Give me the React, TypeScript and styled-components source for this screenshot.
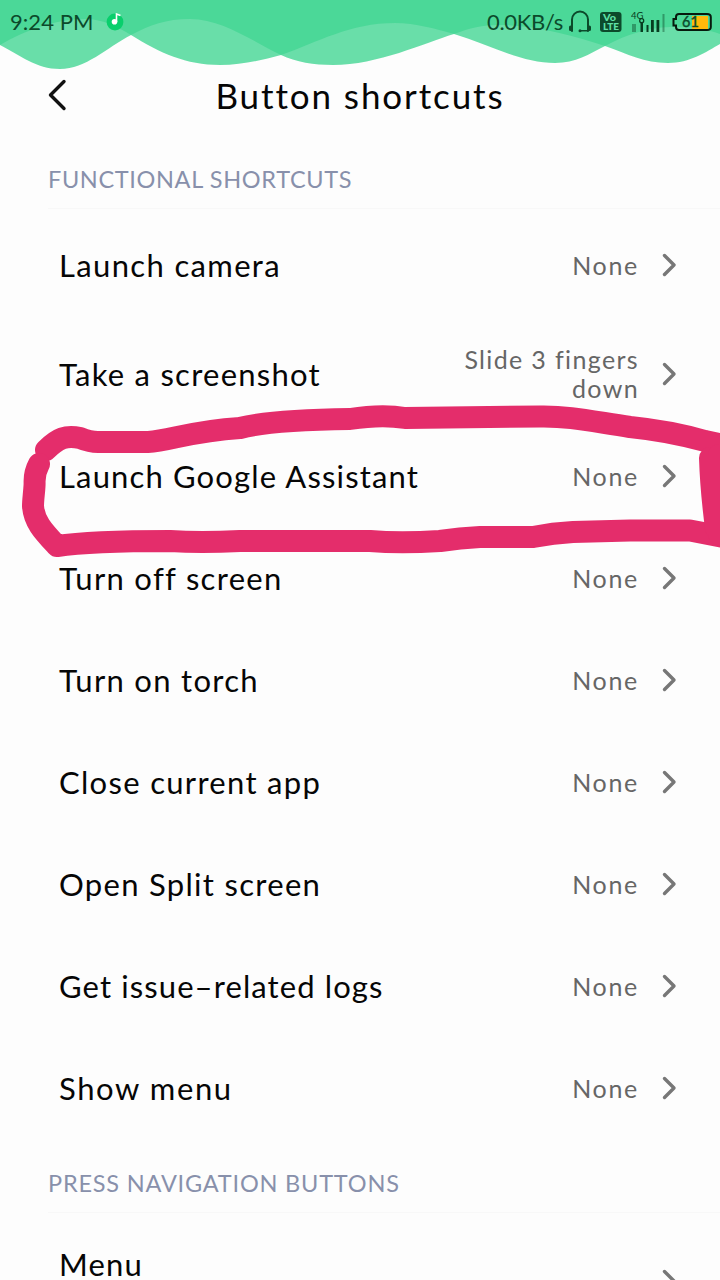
import React from "react";
import styled, { createGlobalStyle } from "styled-components";

const GlobalStyle = createGlobalStyle`
  * { box-sizing: border-box; }
  body { margin: 0; background: #fdfdfd; overflow: hidden; }
`;

const Screen = styled.main`
  position: relative;
  display: flex;
  flex-direction: column;
  width: 720px;
  height: 1280px;
  overflow: hidden;
  background: #fdfdfd;
  color: #060606;
  font-family: Lato, "Open Sans", sans-serif;

  > * { flex-shrink: 0; }
`;

const Waves = styled.svg`
  position: absolute;
  top: 0;
  left: 0;
`;

const StatusBar = styled.header`
  position: relative;
  display: flex;
  align-items: center;
  justify-content: space-between;
  height: 44px;
  padding: 0 8px 0 10px;
  color: #0c4a2b;
`;

const StatusGroup = styled.div`
  display: flex;
  align-items: center;
`;

const StatusText = styled.span<{ $track: number }>`
  font-size: 22px;
  line-height: 44px;
  letter-spacing: ${(p) => p.$track}px;
  white-space: nowrap;
`;

const StatusIcon = styled.svg<{ $before: number }>`
  display: block;
  margin-left: ${(p) => p.$before}px;
  font-family: Lato, sans-serif;
`;

const TitleBar = styled.div`
  display: grid;
  grid-template-columns: 96px 1fr 96px;
  align-items: center;
  height: 104px;
`;

const BackButton = styled.button`
  display: flex;
  padding: 0 0 2px 47px;
  border: 0;
  background: none;
`;

const Title = styled.h1`
  margin: 0;
  padding-bottom: 2px;
  font-size: 35px;
  font-weight: 400;
  line-height: 44px;
  letter-spacing: 1.9px;
  text-align: center;
  white-space: nowrap;
`;

const Section = styled.section`
  display: flex;
  flex-direction: column;
`;

const SectionTitle = styled.h2<{ $track: number }>`
  height: 61px;
  margin: 0 0 0 48px;
  border-bottom: 1px solid #f8f8f8;
  color: #8890ab;
  font-size: 23.5px;
  font-weight: 400;
  line-height: 63px;
  letter-spacing: ${(p) => p.$track}px;
  white-space: nowrap;
`;

const Rows = styled.div`
  display: flex;
  flex-direction: column;
  padding: 5px 0 13px;
`;

const Row = styled.div<{ $tall?: boolean }>`
  display: flex;
  align-items: center;
  height: ${(p) => (p.$tall ? 109 : 102)}px;
  padding: ${(p) => (p.$tall ? 7 : 0)}px 43px 0 59px;
`;

const Label = styled.span<{ $track: number }>`
  flex: 1;
  font-size: 31px;
  line-height: 40px;
  letter-spacing: ${(p) => p.$track}px;
  white-space: nowrap;
`;

const DetailRow = styled(Row)`
  height: 136px;
  align-items: flex-start;
  padding-top: 37px;

  ${Label} { line-height: 28px; }
  svg { margin-top: 19px; }
`;

const Value = styled.span<{ $track: number }>`
  width: 190px;
  margin-right: 23px;
  color: #666;
  font-size: 25px;
  line-height: 29px;
  letter-spacing: ${(p) => p.$track}px;
  text-align: right;
`;

const Marker = styled.svg`
  position: absolute;
  top: 400px;
  left: 0;
`;

const Chevron = () => (
  <svg width="15" height="24" viewBox="0 0 15 24" fill="none" stroke="#777" strokeWidth="3.4" strokeLinecap="round" strokeLinejoin="round">
    <path d="M2.5 2.5 12 12 2.5 21.5" />
  </svg>
);

const shortcuts = [
  { label: "Launch camera", value: "None", track: 1.35 },
  { label: "Take a screenshot", value: "Slide 3 fingers down", track: 1.25 },
  { label: "Launch Google Assistant", value: "None", track: 1.15 },
  { label: "Turn off screen", value: "None", track: 1.3 },
  { label: "Turn on torch", value: "None", track: 1.3 },
  { label: "Close current app", value: "None", track: 1.3 },
  { label: "Open Split screen", value: "None", track: 1.3 },
  { label: "Get issue–related logs", value: "None", track: 1.1 },
  { label: "Show menu", value: "None", track: 1.6 },
];

export default function App() {
  return (
    <Screen>
      <GlobalStyle />
      <Waves width="720" height="72" viewBox="0 0 720 72" fill="#43d694" fillOpacity="0.8">
        <path d="M0 0V45C20 55 36 69 60 69C86 69 106 48 131 35C150 25 166 19 190 19C222 19 252 41 281 55C296 62 314 65 333 65C378 65 424 43 454 34C470 28 482 25 500 25C536 25 574 36 605 46C628 54 644 63 668 63C690 63 706 52 720 44V0Z" />
        <path d="M0 0V45C26 30 56 19 85 19C104 19 118 27 131 35C160 53 186 65 220 65C243 65 262 60 281 55C318 42 350 23 395 23C416 23 436 29 454 34C490 45 522 63 555 63C576 63 589 54 605 46C628 34 646 28 670 27C692 26 708 30 720 34V0Z" />
      </Waves>
      <StatusBar>
        <StatusGroup>
          <StatusText $track={0.05}>9:24 PM</StatusText>
          <StatusIcon $before={13} width="18" height="18" viewBox="0 0 18 18">
            <circle cx="9" cy="9" r="8.4" fill="#08cf6c" />
            <circle cx="8.5" cy="8.8" r="2.8" fill="#fff" />
            <path d="M10.5 9V1l4 1.5" fill="none" stroke="#fff" strokeWidth="1.6" />
          </StatusIcon>
        </StatusGroup>
        <StatusGroup>
          <StatusText $track={-0.3}>0.0KB/s</StatusText>
          <StatusIcon $before={5} width="24" height="24" viewBox="0 0 24 24" fill="none" stroke="#0c4a2b" strokeLinecap="round">
            <path d="M4 16V9.5a8 8 0 0 1 16 0V16" strokeWidth="2" />
            <path d="M2.5 17v2.5M21.5 17v2.5" strokeWidth="3" />
            <path d="M4 15v6M20 15v6" strokeWidth="2" />
            <path d="M19.5 20.8H13" strokeWidth="1.5" />
            <circle cx="12" cy="20.7" r="1.5" fill="#0c4a2b" stroke="none" />
          </StatusIcon>
          <StatusIcon $before={8} width="22" height="22" viewBox="0 0 22 22" fontWeight="900" fill="#5fe0a6">
            <rect x="0" y="1" width="21.5" height="20" rx="3" fill="#0c4a2b" />
            <text x="3" y="10" fontSize="9.5" textLength="13" lengthAdjust="spacingAndGlyphs">Vo</text>
            <text x="3" y="19" fontSize="10" textLength="16" lengthAdjust="spacingAndGlyphs">LTE</text>
          </StatusIcon>
          <StatusIcon $before={9} width="35" height="24" viewBox="0 0 35 24" fill="#073d20">
            <text x="0" y="8.5" fontSize="9.5">4G</text>
            <path d="M1 14h4v8H1zM31.5 4h2v18h-2z" fillOpacity="0.4" />
            <path d="M9.5 11h2.5v11H9.5zM15.5 15h2v7h-2zM20 10h2.8v12H20zM25.5 10h2.8v12h-2.8z" />
            <circle cx="10.7" cy="10.7" r="2" fill="#4bd997" stroke="#073d20" strokeWidth="1.3" />
          </StatusIcon>
          <StatusIcon $before={6} width="40" height="20" viewBox="0 0 40 20">
            <rect x="20" y="4" width="16" height="13" fill="#ffb90b" />
            <path d="M7 2H35Q38.8 2 38.8 5V15Q38.8 18 35 18H7Q4 18 4 15V13.5H1.500V7H4V5Q4 2 7 2Z" fill="none" stroke="#071a0d" strokeWidth="2" />
            <text x="18.5" y="15.2" fontSize="14.5" textAnchor="middle" fill="#0c4a2b" stroke="#0c4a2b" strokeWidth="0.4">61</text>
          </StatusIcon>
        </StatusGroup>
      </StatusBar>
      <TitleBar>
        <BackButton aria-label="Back">
          <svg width="22" height="32" viewBox="0 0 22 32" fill="none" stroke="#111" strokeWidth="3.4" strokeLinecap="round" strokeLinejoin="round">
            <path d="M17 2.5 3.5 16 17 29.5" />
          </svg>
        </BackButton>
        <Title>Button shortcuts</Title>
      </TitleBar>
      <Section>
        <SectionTitle $track={0.65}>FUNCTIONAL SHORTCUTS</SectionTitle>
        <Rows>
          {shortcuts.map((s) => (
            <Row key={s.label} $tall={s.value !== "None"}>
              <Label $track={s.track}>{s.label}</Label>
              <Value $track={s.value === "None" ? 1.7 : 1.35}>{s.value}</Value>
              <Chevron />
            </Row>
          ))}
        </Rows>
      </Section>
      <Section>
        <SectionTitle $track={0.8}>PRESS NAVIGATION BUTTONS</SectionTitle>
        <DetailRow>
          <Label $track={1.2}>Menu</Label>
          <Chevron />
        </DetailRow>
      </Section>
      <Marker width="720" height="160" viewBox="0 400 720 160" fill="none" stroke="#e42d6b" strokeWidth="22" strokeLinecap="round" strokeLinejoin="round">
        <path d="M46 450C58 438 66 435 80 438Q90 442 98 442H148C170 441 190 431 240 428Q270 420 350 419Q382 414 405 418L540 416.500C570 416 590 421 630 427C660 430 680 434 705 441L724 445" />
        <path d="M39 464C33 475 35 480 34.500 486C34 494 33 500 33 506C34 522 44 532 57 546C90 541 140 541 170 541Q200 543 240 541H370Q400 543.500 440 541Q460 538 480 537H533Q553 533 573 532L630 530.500H690L724 537" />
        <path d="M710 458Q711 490 716 528" />
        <path d="M719 455V534" />
      </Marker>
    </Screen>
  );
}
